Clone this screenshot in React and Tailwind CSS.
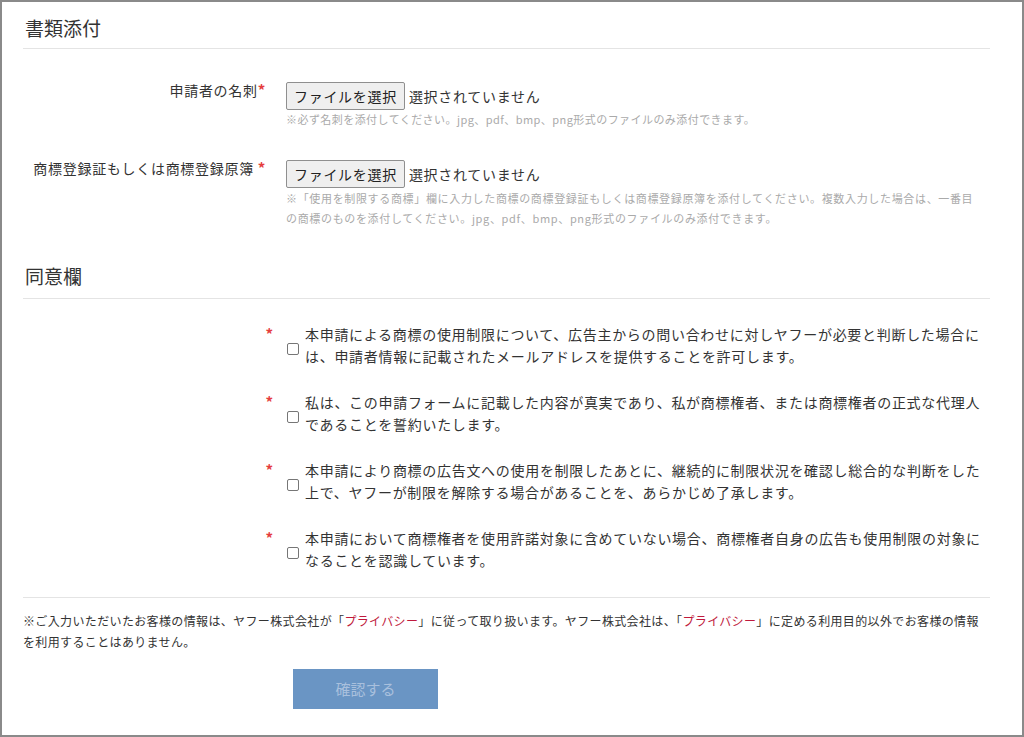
export default function App() {
  const font = { fontFamily: '"Noto Sans CJK JP", "Noto Sans", sans-serif' };
  const checks = [
    "本申請による商標の使用制限について、広告主からの問い合わせに対しヤフーが必要と判断した場合には、申請者情報に記載されたメールアドレスを提供することを許可します。",
    "私は、この申請フォームに記載した内容が真実であり、私が商標権者、または商標権者の正式な代理人であることを誓約いたします。",
    "本申請により商標の広告文への使用を制限したあとに、継続的に制限状況を確認し総合的な判断をした上で、ヤフーが制限を解除する場合があることを、あらかじめ了承します。",
    "本申請において商標権者を使用許諾対象に含めていない場合、商標権者自身の広告も使用制限の対象になることを認識しています。",
  ];
  const FileBtn = () => (
    <div className="flex items-center">
      <div className="border border-[#8f8f8f] bg-[#efefef] rounded-[2px] h-[28px] px-[7px] flex items-center text-[14px] tracking-[0.05em] text-[#222]">ファイルを選択</div>
      <span className="ml-[4px] text-[14px] tracking-[0.05em] text-[#333]">選択されていません</span>
    </div>
  );
  return (
    <div style={font} className="w-[1024px] h-[737px] bg-white border-2 border-[#8a8a8a] box-border pl-[21px] pr-[32px] text-[#333] overflow-hidden">
      <h2 className="text-[19px] leading-[24px] pt-[14px] pb-[8px] pl-[2px] text-[#333] border-b border-[#e4e4e4]">書類添付</h2>
      <div className="flex mt-[31px]">
        <div className="w-[243px] text-right text-[14px] tracking-[0.05em] leading-[20px]">申請者の名刺<span className="text-[#e53e3e] text-[15px] font-bold">*</span></div>
        <div className="ml-[20px] mt-[2px]">
          <FileBtn />
          <div className="text-[11px] tracking-[0.04em] text-[#aaa] leading-[17px] mt-[1px]">※必ず名刺を添付してください。jpg、pdf、bmp、png形式のファイルのみ添付できます。</div>
        </div>
      </div>
      <div className="flex mt-[30px]">
        <div className="w-[243px] text-right text-[14px] tracking-[0.05em] leading-[20px]">商標登録証もしくは商標登録原簿 <span className="text-[#e53e3e] text-[15px] font-bold">*</span></div>
        <div className="ml-[20px] mt-[2px] flex-1 pr-[8px]">
          <FileBtn />
          <div className="text-[11px] tracking-[0.06em] text-[#aaa] leading-[20px]">※「使用を制限する商標」欄に入力した商標の商標登録証もしくは商標登録原簿を添付してください。複数入力した場合は、一番目の商標のものを添付してください。jpg、pdf、bmp、png形式のファイルのみ添付できます。</div>
        </div>
      </div>
      <h2 className="text-[19px] leading-[24px] mt-[36px] pb-[10px] pl-[2px] border-b border-[#e4e4e4]">同意欄</h2>
      <div className="mt-[24px] flex flex-col gap-[24px]">
        {checks.map((t, i) => (
          <div key={i} className="flex">
            <div className="w-[250px] text-right text-[#e53e3e] text-[15px] font-bold leading-[22px]">*</div>
            <div className="ml-[14px] flex items-center h-[44px]">
              <div className="w-[12px] h-[12px] border border-[#767676] rounded-[2px] bg-white mt-[8px]" />
            </div>
            <div className="ml-[6px] text-[14px] tracking-[0.05em] leading-[22px] flex-1 pr-[8px]">{t}</div>
          </div>
        ))}
      </div>
      <div className="mt-[26px] border-t border-[#e4e4e4] pt-[12px] text-[12px] tracking-[0.03em] leading-[21px] text-[#333]">
        ※ご入力いただいたお客様の情報は、ヤフー株式会社が「<span className="text-[#c0193c]">プライバシー</span>」に従って取り扱います。ヤフー株式会社は、「<span className="text-[#c0193c]">プライバシー</span>」に定める利用目的以外でお客様の情報を利用することはありません。
      </div>
      <div className="mt-[17px] ml-[270px] w-[145px] h-[40px] bg-[#6a95c4] flex items-center justify-center text-[15px] text-[#a9c0dd]">確認する</div>
    </div>
  );
}
